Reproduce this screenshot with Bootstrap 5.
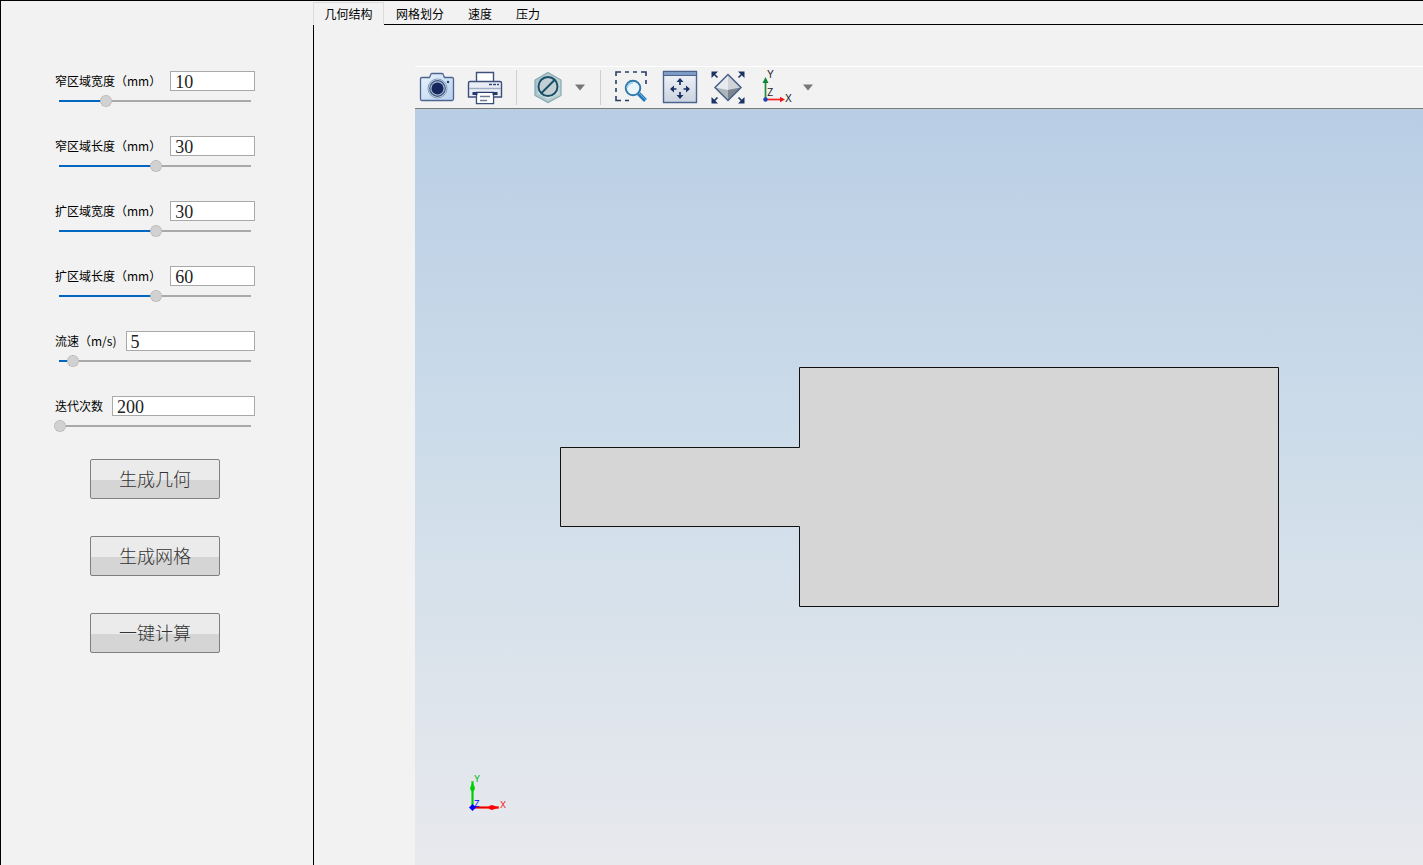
<!DOCTYPE html>
<html lang="zh-CN">
<head>
<meta charset="utf-8">
<meta name="viewport" content="width=device-width, initial-scale=1">
<title>几何结构</title>
<link href="https://cdn.jsdelivr.net/npm/bootstrap@5.3.0/dist/css/bootstrap.min.css" rel="stylesheet">
<style>
body{background:#f2f2f2;color:#000;font:12px/16px "Noto Sans CJK SC",sans-serif}
.app{border-top:1px solid #000;border-left:1px solid #000}
.params{width:312px;padding:70px 58px 0 54px}
.field{height:65px}
.field label{margin-right:9px;white-space:nowrap}
.field .form-control{height:20px;min-width:0;padding:2px 3px 0 4px;border:1px solid #a9a9a9;border-radius:0;background:#fff;color:#222;font:18px/18px "Liberation Serif","Noto Sans CJK SC",serif}
.slider{display:block;appearance:none;width:204px;height:12px;margin:4px -2px 0 -1px;background:linear-gradient(to right,#0067c0 var(--fill),#a9a9a9 0) 5px center/192px 2px no-repeat}
.slider::-webkit-slider-thumb{appearance:none;width:12px;height:12px;border:1px dotted #aaa;border-radius:50%;background:#d1d1d1}
.slider::-moz-range-thumb{width:10px;height:10px;border:1px dotted #aaa;border-radius:50%;background:#d1d1d1}
.actions{gap:37px;margin-top:-2px}
.act{width:130px;height:40px;padding:0 0 3px;border:1px solid #7f7f7f;border-radius:2px;background:linear-gradient(#ebebeb 53%,#d5d5d5 53%);color:#333;font-size:18px;font-weight:300;line-height:24px}
.act:hover{border-color:#7f7f7f;color:#000}
.tabs{height:24px;padding-top:1px}
.tabs button{height:23px;padding:1px 12px 0;border:0;border-bottom:1px solid #000;background:none;color:#000;line-height:18px}
.tabs button.active{width:71px;padding:0;border:1px solid #dcdcdc;border-bottom-color:#f2f2f2}
.tabs .rest{border-bottom:1px solid #000}
.work{border-left:1px solid #000;padding:41px 0 0 101px}
.tools{height:43px;border-top:1px solid #fff;border-bottom:1px solid #7a7a76}
.tool{width:44px;padding:0;border:0}
.tool svg,.more svg{display:block}
.more{width:20px;padding:0;border:0}
.rule{width:1px;margin:3px 9px;background:#cfcfcf}
.more+.rule{margin-left:10px}
.view{background:linear-gradient(#b9cee5,#d0deea 50%,#e8e9ed)}
.shape{width:722px;height:240px}
.triad{left:50px;bottom:50px}
</style>
</head>
<body>
<div class="app d-flex min-vh-100">
<aside class="params flex-shrink-0">
<form>
<div class="field"><div class="d-flex align-items-center"><label for="w1">窄区域宽度（mm）</label><input id="w1" class="form-control" value="10"></div><input type="range" class="slider" aria-label="窄区域宽度" min="0" max="100" value="24" style="--fill:24%"></div>
<div class="field"><div class="d-flex align-items-center"><label for="l1">窄区域长度（mm）</label><input id="l1" class="form-control" value="30"></div><input type="range" class="slider" aria-label="窄区域长度" min="0" max="100" value="50" style="--fill:50%"></div>
<div class="field"><div class="d-flex align-items-center"><label for="w2">扩区域宽度（mm）</label><input id="w2" class="form-control" value="30"></div><input type="range" class="slider" aria-label="扩区域宽度" min="0" max="100" value="50" style="--fill:50%"></div>
<div class="field"><div class="d-flex align-items-center"><label for="l2">扩区域长度（mm）</label><input id="l2" class="form-control" value="60"></div><input type="range" class="slider" aria-label="扩区域长度" min="0" max="100" value="50" style="--fill:50%"></div>
<div class="field"><div class="d-flex align-items-center"><label for="v">流速（m/s)</label><input id="v" class="form-control" value="5"></div><input type="range" class="slider" aria-label="流速" min="0" max="100" value="7" style="--fill:7%"></div>
<div class="field"><div class="d-flex align-items-center"><label for="n">迭代次数</label><input id="n" class="form-control" value="200"></div><input type="range" class="slider" aria-label="迭代次数" min="0" max="100" value="0" style="--fill:0%"></div>
<div class="actions d-flex flex-column align-items-center">
<button type="button" class="btn act">生成几何</button>
<button type="button" class="btn act">生成网格</button>
<button type="button" class="btn act">一键计算</button>
</div>
</form>
</aside>
<main class="flex-grow-1 d-flex flex-column">
<div class="tabs d-flex" role="tablist">
<button type="button" class="active" role="tab" aria-selected="true">几何结构</button><button type="button" role="tab">网格划分</button><button type="button" role="tab">速度</button><button type="button" role="tab">压力</button><div class="rest flex-grow-1"></div>
</div>
<div class="work flex-grow-1 d-flex flex-column">
<div class="tools d-flex">
<div class="d-flex gap-1">
<button type="button" class="btn tool" aria-label="截图"><svg width="44" height="41" viewBox="0 0 44 41"><defs><linearGradient id="cam" x2="1" y2="1"><stop stop-color="#eaf3fc"/><stop offset="1" stop-color="#b5d0ee"/></linearGradient></defs><path d="M7 10.500h7.500l1.500-3.500q.3-.5 1-.5h10q.7 0 1 .5l1.500 3.500H37q1.500 0 1.500 1.500v20q0 1.500-1.500 1.500H7q-1.500 0-1.500-1.500V12q0-1.500 1.500-1.500z" fill="url(#cam)" stroke="#4d6590" stroke-width="1.300"/><circle cx="22.500" cy="21.500" r="9.500" fill="#dce9f5" stroke="#8198b5"/><circle cx="22.500" cy="21.500" r="7.800" fill="#a9bdd6" stroke="#3d5580" stroke-width="1.200"/><circle cx="22.500" cy="21.500" r="6" fill="#15285d"/><circle cx="33" cy="15" r="1.200" fill="#25406f"/></svg></button>
<button type="button" class="btn tool" aria-label="打印"><svg width="44" height="41" viewBox="0 0 44 41"><g fill="#fff" stroke="#3c507c" stroke-width="1.400"><path d="M13.500 14V5.500h17V14"/><path d="M7 14.500h30q1.500 0 1.500 1.500v14h-33V16q0-1.500 1.500-1.500z" fill="#e9edf5"/><path d="M6 21.500h32" stroke="#a1adc0"/><path d="M13.500 25.500h17v11h-17z"/></g><path d="M9.500 25h25v3h-25z" fill="#263b68"/><path d="M14.500 26h15v10h-15z" fill="#fff"/><path d="M17 29.500h10M17 33.500h7" stroke="#6d7a95" stroke-width="1.300"/><path d="M26 17.500h3m1 0h3m1 0h2" stroke="#344a78" stroke-width="1.500"/></svg></button>
</div>
<div class="rule"></div>
<button type="button" class="btn tool" aria-label="材料"><svg width="44" height="41" viewBox="0 0 44 41"><defs><linearGradient id="hex" x2="1"><stop stop-color="#a8c5c9"/><stop offset="1" stop-color="#c1d3d7"/></linearGradient></defs><path d="M22 5.500 35 13v15.500L22 35.500 9 28.500V13z" fill="url(#hex)" stroke="#86a9b1" stroke-width="1.200"/><path d="M22 9 32 15v11.500L22 32l-10-5.500V15z" fill="#d9e4e6"/><circle cx="22" cy="19.500" r="9.500" fill="#c4cfd3" stroke="#164f67" stroke-width="1.900"/><path d="m15.500 26 13-13" stroke="#164f67" stroke-width="1.900"/></svg></button>
<button type="button" class="btn more" aria-label="材料选项"><svg width="20" height="41"><path d="M5 17.500h10l-5 6z" fill="#777"/></svg></button>
<div class="rule"></div>
<div class="d-flex gap-1">
<button type="button" class="btn tool" aria-label="框选缩放"><svg width="44" height="41" viewBox="0 0 44 41"><path d="M6 9V5h5m4 0h4m4 0h4m4 0h5v4m0 4v4M6 13v4m0 4v4m0 4v4.500h5m4 0h4" fill="none" stroke="#283b67" stroke-width="1.600"/><circle cx="23" cy="21" r="7.300" fill="#eaf5fc" stroke="#2e78aa" stroke-width="1.900"/><path d="m17 21q1-5 6-5" fill="none" stroke="#9dcbe8" stroke-width="1.500"/><path d="m28.500 26.500 7 7" stroke="#2679b9" stroke-width="4"/><path d="m29 26 7 7" stroke="#62b5e8" stroke-width="1"/></svg></button>
<button type="button" class="btn tool" aria-label="缩放至全部"><svg width="44" height="41" viewBox="0 0 44 41"><defs><linearGradient id="win" x2="0" y2="1"><stop stop-color="#f2f5f9"/><stop offset="1" stop-color="#cbd3df"/></linearGradient></defs><path d="M5.500 4.500h33v31h-33z" fill="url(#win)" stroke="#4c658f" stroke-width="1.400"/><path d="M6 5h32v3H6z" fill="#7e9bc5"/><path d="M6 8.500h32" stroke="#4c658f"/><path d="M22 18v-4m0 11v4m-3.500-7h-5m12 0h5" stroke="#1c3264" stroke-width="1.700"/><path d="m22 11 3.500 4h-7zM22 32l-3.500-4h7zM12 22l4-3.500v7zM32 22l-4-3.500v7z" fill="#1c3264"/></svg></button>
<button type="button" class="btn tool" aria-label="充满窗口"><svg width="44" height="41" viewBox="0 0 44 41"><path d="M22 7.500v26l-13-13z" fill="#e8eaed"/><path d="M22 7.500v26l13-13z" fill="#d0d4d8"/><path d="m9 20.500 13 2.500 13-2.500-13 13z" fill="#aeb4bb"/><path d="M22 23v10.500l13-13z" fill="#7c8590"/><path d="m22 7.500 13 13-13 13-13-13z" fill="none" stroke="#485f87" stroke-width="1.500"/><path d="m11.500 10.500-5-5m26 5 5-5m-26 25-5 5m26-5 5 5" stroke="#1c3264" stroke-width="1.600"/><path d="M5.500 4.500H12l-6.500 6.500zM38.500 4.500H32l6.500 6.500zM5.500 36.500H12L5.500 30zM38.500 36.500H32l6.500-6.500z" fill="#1c3264"/></svg></button>
<button type="button" class="btn tool" aria-label="视图方向"><svg width="44" height="41" viewBox="0 0 44 41"><path d="M11.500 32V15" stroke="#238a42" stroke-width="1.700"/><path d="m11.500 10 3 6h-6z" fill="#108438"/><path d="M12 32.500h14" stroke="#f22" stroke-width="1.700"/><path d="m31 32.500-5 2.700v-5.400z" fill="#ee1515"/><circle cx="11.500" cy="32.500" r="2.200" fill="#1d43b7"/><g font-family="Inter" font-size="10" fill="#222"><text x="13" y="11">Y</text><text x="13" y="29">Z</text><text x="31" y="35">X</text></g></svg></button>
</div>
<button type="button" class="btn more" aria-label="视图方向选项"><svg width="20" height="41"><path d="M5 17.500h10l-5 6z" fill="#777"/></svg></button>
</div>
<div class="view position-relative flex-grow-1 d-flex align-items-center justify-content-center">
<svg class="shape" viewBox="-2 0 722 240" role="img" aria-label="几何模型"><path d="M.5 80.500h239v-80h479v239h-479v-80H.500z" fill="#d6d6d6" stroke="#111"/></svg>
<svg class="triad position-absolute" width="46" height="44" viewBox="0 0 46 44"><path d="M7.500 36V10" stroke="#5bdc63" stroke-width="3"/><path d="M7.500 36V11" stroke="#00c80a"/><path d="m7.500 11 2.500 6-1 3H6l-1-3z" fill="#00d000"/><path d="M8 36.500h26" stroke="#f75d5d" stroke-width="3"/><path d="M8 36.500h25" stroke="#e00000"/><path d="m34 36.500-7-2.500-3 1v3l3 1z" fill="#f00"/><path d="m7.500 33 3.500 3.500-3.500 3.500L4 36.500z" fill="#00f"/><g font-family="Inter" font-size="9"><text x="9" y="11" fill="#00b80a">Y</text><text x="9" y="36" fill="#00f">Z</text><text x="35" y="37" fill="#e22">X</text></g></svg>
</div>
</div>
</main>
</div>
<script src="https://cdn.jsdelivr.net/npm/bootstrap@5.3.0/dist/js/bootstrap.bundle.min.js"></script>
</body>
</html>
